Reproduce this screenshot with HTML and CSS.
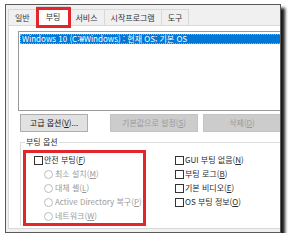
FILE: index.html
```html
<!DOCTYPE html>
<html lang="ko">
<head>
<meta charset="utf-8">
<link rel="stylesheet" href="styles.css">
</head>
<body>
<div class="win">
  <div class="tabs">
    <div class="tab">일반</div>
    <div class="tab sel">부팅</div>
    <div class="tab">서비스</div>
    <div class="tab">시작프로그램</div>
    <div class="tab">도구</div>
  </div>
  <div class="panel">
    <div class="list">
      <div class="row">Windows 10 (C:₩Windows) : 현재 OS; 기본 OS</div>
    </div>
    <div class="btns">
      <div class="btn b1">고급 옵션(<u>V</u>)...</div>
      <div class="btn b2 dis">기본값으로 설정(<u>S</u>)</div>
      <div class="btn b3 dis">삭제(<u>D</u>)</div>
    </div>
    <div class="group">
      <div class="legend">부팅 옵션</div>
      <div class="gbody">
        <div class="col left">
          <div class="opt"><span class="chk"></span>안전 부팅(<u>F</u>)</div>
          <div class="opt sub dis"><span class="rad"></span>최소 설치(<u>M</u>)</div>
          <div class="opt sub dis"><span class="rad"></span>대체 셸(<u>L</u>)</div>
          <div class="opt sub dis"><span class="rad"></span>Active Directory 복구(<u>P</u>)</div>
          <div class="opt sub dis"><span class="rad"></span>네트워크(<u>W</u>)</div>
        </div>
        <div class="col right">
          <div class="opt"><span class="chk"></span>GUI 부팅 없음(<u>N</u>)</div>
          <div class="opt"><span class="chk"></span>부팅 로그(<u>B</u>)</div>
          <div class="opt"><span class="chk"></span>기본 비디오(<u>E</u>)</div>
          <div class="opt"><span class="chk"></span>OS 부팅 정보(<u>O</u>)</div>
        </div>
      </div>
    </div>
  </div>
</div>
</body>
</html>
```

FILE: styles.css
```css
html, body {
  margin: 0;
  background: #ffffff;
}
body {
  padding: 4px 0 0 5px;
  font-family: "Noto Sans CJK KR", "Noto Sans", sans-serif;
  font-size: 8px;
  color: #2a2a2a;
  line-height: 1;
}
u { text-decoration-thickness: 1px; text-underline-offset: 1px; }

.win {
  width: 274px;
  height: 227px;
  border: 1px solid #5a5a5a;
  background: #f0f0f0;
  overflow: hidden;
  box-shadow: 4px 4px 3px 0 rgba(0, 0, 0, 0.9);
}

.tabs {
  display: flex;
  align-items: flex-end;
  height: 20px;
  padding-left: 2px;
}
.tab {
  height: 15px;
  display: flex;
  align-items: center;
  padding: 0 6px;
  border: 1px solid #d9d9d9;
  border-bottom: none;
  border-left: none;
  background: #f0f0f0;
  color: #333;
}
.tab:first-child { border-left: 1px solid #d9d9d9; }
.tab.sel {
  position: relative;
  z-index: 1;
  height: 19px;
  padding: 0 9px;
  margin: 0 -1px -1px -1px;
  background: #ffffff;
  border-left: 1px solid #d9d9d9;
}
.tab.sel::after {
  content: "";
  position: absolute;
  left: -1px;
  right: -2px;
  top: 0;
  bottom: -2px;
  border: 3px solid #e3262b;
}

.panel {
  width: 300px;
  height: 204px;
  margin-left: 2px;
  border: 1px solid #d9d9d9;
  background: #ffffff;
  padding-top: 5px;
  box-sizing: border-box;
}
.list {
  margin-left: 9px;
  height: 80px;
  border: 1px solid #9a9a9a;
  box-sizing: border-box;
  padding: 2px 0 0 1px;
}
.row {
  height: 10px;
  background: #0078d7;
  color: #ffffff;
  padding-left: 2px;
  display: flex;
  align-items: center;
  outline: 1px dotted #7fb4e6;
  outline-offset: -1px;
}

.btns {
  display: flex;
  margin: 3px 0 0 11px;
}
.btn {
  height: 18px;
  box-sizing: border-box;
  display: flex;
  align-items: center;
  justify-content: center;
  background: #e1e1e1;
  border: 1px solid #adadad;
  color: #222;
}
.btn.dis {
  background: #cccccc;
  border-color: #c4c4c4;
  color: #9a9a9a;
}
.b1 { width: 68px; }
.b2 { width: 88px; margin-left: 22px; }
.b3 { width: 78px; margin-left: 5px; }

.group {
  margin: 10px 0 0 11px;
  border-top: 1px solid #dcdcdc;
  border-left: 1px solid #dcdcdc;
  position: relative;
}
.legend {
  position: absolute;
  left: 4px;
  top: -5px;
  padding: 0 1px;
  background: #ffffff;
  color: #333;
}
.gbody {
  display: flex;
  margin-top: 7px;
  margin-left: 2px;
}
.col {
  display: flex;
  flex-direction: column;
}
.left {
  width: 123px;
  border: 3px solid #e3262b;
  padding-left: 8px;
  box-sizing: border-box;
}
.right {
  margin-left: 29px;
  padding-top: 3px;
}
.opt {
  height: 14px;
  display: flex;
  align-items: center;
  white-space: nowrap;
}
.opt.sub { padding-left: 10px; }
.opt.dis { color: #9a9a9a; }
.chk {
  width: 7px;
  height: 7px;
  border: 1px solid #333;
  background: #fff;
  margin-right: 1px;
  flex: none;
}
.rad {
  width: 7px;
  height: 7px;
  border: 1px solid #bdbdbd;
  border-radius: 50%;
  background: #fff;
  margin-right: 2px;
  flex: none;
}
```
